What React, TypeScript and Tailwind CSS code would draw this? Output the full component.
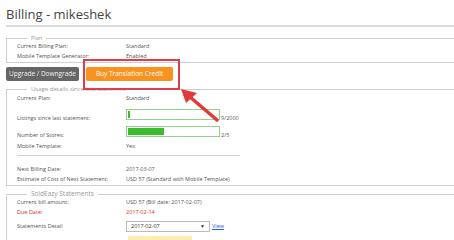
const Row = ({
  label,
  children,
  className = "",
}: {
  label: string;
  children?: React.ReactNode;
  className?: string;
}) => (
  <div className={`flex items-center h-[10px] ${className}`}>
    <span className="w-[109px] shrink-0">{label}</span>
    <div className="flex items-center">{children}</div>
  </div>
);

const Bar = ({ pct, note }: { pct: number; note: string }) => (
  <div className="flex items-end gap-[1px]">
    <div className="w-[94px] h-[11px] border border-[#8fd48a] bg-white p-[1px]">
      <div className="h-full bg-[#3cbc2c]" style={{ width: `${pct}%` }} />
    </div>
    <span className="leading-[8px] -mb-[2px]">{note}</span>
  </div>
);

const App = () => {
  return (
    <div
      className="relative w-[454px] h-[240px] overflow-hidden bg-white text-[#555] text-[5.5px] leading-[10px]"
      style={{ fontFamily: '"Open Sans", "Noto Sans", sans-serif' }}
    >
      <h1 className="ml-[6px] pt-[5px] text-[13px] leading-[19px] text-[#444]">Billing - mikeshek</h1>
      <div className="ml-[6px] mt-[1px] w-[700px] h-[2px] bg-[#dcdcdc]" />

      <fieldset className="ml-[6px] mt-[8px] w-[700px] border border-[#cfcfcf] pl-[10px] pb-[1px]">
        <legend className="ml-[10px] px-[4px] text-[#999] leading-[6px]">Plan</legend>
        <Row label="Current Billing Plan:">Standard</Row>
        <Row label="Mobile Template Generator:">Enabled</Row>
      </fieldset>

      <div className="ml-[6px] mt-[4px] flex gap-[7px]">
        <button className="w-[73px] h-[14px] rounded-[2px] bg-[#666] text-[#eee] text-[6.5px] leading-[14px] text-center">
          Upgrade / Downgrade
        </button>
        <button className="w-[87px] h-[14px] rounded-[2px] bg-[#f7931e] text-white text-[6.5px] leading-[14px] text-center">
          Buy Translation Credit
        </button>
      </div>

      <fieldset className="ml-[6px] mt-[5px] w-[700px] border border-[#cfcfcf] pl-[10px] pb-[1px]">
        <legend className="ml-[10px] px-[4px] text-[#999] text-[6px] leading-[6px]">
          Usage details since last statement
        </legend>
        <Row label="Current Plan:" className="mt-[1px]">Standard</Row>
        <div className="flex items-end h-[14px] mt-[3px]">
          <span className="w-[109px] shrink-0 leading-[8px] -mb-[2px]">Listings since last statement:</span>
          <Bar pct={2} note="9/2000" />
        </div>
        <div className="flex items-end h-[12px] mt-[5px]">
          <span className="w-[109px] shrink-0 leading-[8px] -mb-[2px]">Number of Stores:</span>
          <Bar pct={40} note="2/5" />
        </div>
        <Row label="Mobile Template:" className="mt-[4px]">Yes</Row>
        <div className="w-[223px] h-[1px] bg-[#cfcfcf] mt-[4px] mb-[8px]" />
        <Row label="Next Billing Date:">2017-03-07</Row>
        <Row label="Estimate of Cost of Next Statement:">USD 57 (Standard with Mobile Template)</Row>
      </fieldset>

      <fieldset className="ml-[6px] mt-[5px] w-[700px] border border-[#cfcfcf] pl-[10px] pb-[1px]">
        <legend className="ml-[10px] px-[4px] text-[#999] text-[6.5px] leading-[6px]">SoldEazy Statements</legend>
        <Row label="Current bill amount:">USD 57 (Bill date: 2017-02-07)</Row>
        <Row label="Due Date:" className="text-[#d0312d]">2017-02-14</Row>
        <div className="flex items-center h-[12px] mt-[3px]">
          <span className="w-[109px] shrink-0">Statements Detail</span>
          <div className="flex items-center justify-between w-[84px] h-[11px] border border-[#bbb] px-[4px] text-[#333]">
            <span>2017-02-07</span>
            <span className="text-[5px]">▼</span>
          </div>
          <span className="ml-[2px] text-[#2a5bd7] underline">View</span>
        </div>
        <div className="ml-[111px] mt-[4px] w-[64px] h-[8px] bg-[#fbeeb0]" />
      </fieldset>

      <div className="absolute left-[83px] top-[59px] w-[97px] h-[31px] border-2 border-solid border-[#dc3f48]" />
      <svg className="absolute left-0 top-0" width="454" height="240">
        <line x1="217" y1="120" x2="190" y2="97" stroke="#e03a3a" strokeWidth="3.5" strokeLinecap="round" />
        <polygon points="181,89 197,93 186,103" fill="#e03a3a" />
      </svg>
    </div>
  );
};

export default App;
